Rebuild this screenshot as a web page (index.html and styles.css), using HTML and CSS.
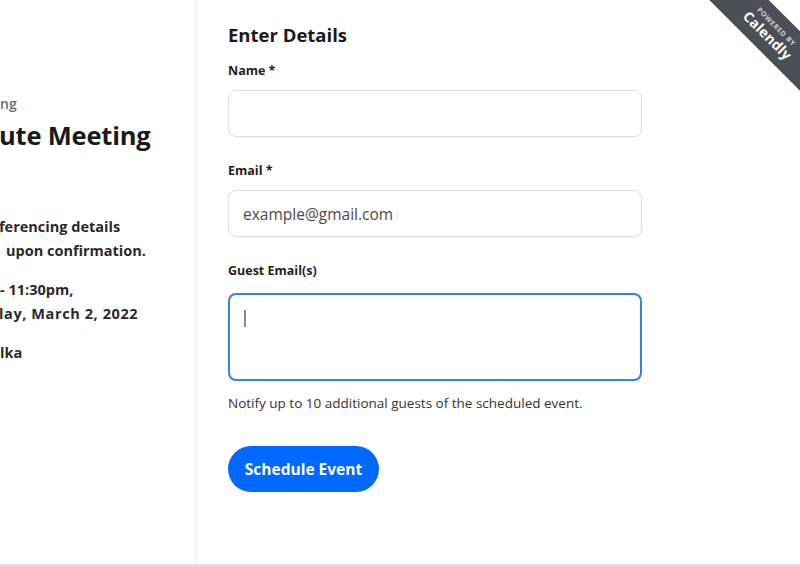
FILE: index.html
```html
<!DOCTYPE html>
<html lang="en">
<head>
<meta charset="utf-8">
<title>Enter Details</title>
<link rel="stylesheet" href="styles.css">
</head>
<body>
<div class="page">
  <aside class="info">
    <div class="owner">ng</div>
    <h1 class="event-name">ute Meeting</h1>
    <div class="detail first">
      <div class="line l-cut">ferencing details</div>
      <div class="line l-indent">upon confirmation.</div>
    </div>
    <div class="detail">
      <div class="line">- 11:30pm,</div>
      <div class="line l-cut l-date">lay, March 2, 2022</div>
    </div>
    <div class="detail">
      <div class="line">lka</div>
    </div>
  </aside>
  <main class="form">
    <h2 class="title">Enter Details</h2>
    <label class="label">Name *</label>
    <div class="field"></div>
    <label class="label gap">Email *</label>
    <div class="field"><span class="value">example@gmail.com</span></div>
    <label class="label gap">Guest Email(s)</label>
    <div class="field area"><span class="caret"></span></div>
    <p class="hint">Notify up to 10 additional guests of the scheduled event.</p>
    <button class="submit">Schedule Event</button>
  </main>
  <div class="badge">
    <span class="badge-small">POWERED BY</span>
    <span class="badge-big">Calendly</span>
  </div>
</div>
<div class="bottom"></div>
</body>
</html>
```
FILE: styles.css
```css
html, body {
  margin: 0;
  padding: 0;
  overflow: hidden;
  background: #ffffff;
  font-family: "Open Sans", "Liberation Sans", sans-serif;
  color: #1a1a1a;
}
.page {
  position: relative;
  display: flex;
  height: 564px;
  overflow: hidden;
}
.info {
  width: 196px;
  flex: 0 0 196px;
  border-right: 1px solid #ebebeb;
  overflow: hidden;
  white-space: nowrap;
}
.owner {
  margin-top: 94px;
  font-size: 14px;
  line-height: 20px;
  color: #6b6b6b;
  font-weight: 600;
}
.event-name {
  margin: 5px 0 0 -1px;
  font-size: 25.5px;
  line-height: 32px;
  font-weight: 700;
  color: #1a1a1a;
  letter-spacing: -0.2px;
}
.detail {
  margin-top: 15px;
  font-size: 14.5px;
  line-height: 24px;
  font-weight: 700;
  color: #2a2a2a;
}
.detail.first { margin-top: 64px; }
.line.l-cut { margin-left: -1px; }
.line.l-indent { margin-left: 6px; }
.line.l-date { letter-spacing: 0.6px; }

.form {
  flex: 1;
  padding: 23px 0 0 31px;
  display: flex;
  flex-direction: column;
  align-items: flex-start;
}
.title {
  margin: 0;
  font-size: 18.5px;
  line-height: 24px;
  font-weight: 700;
  color: #1a1a1a;
}
.label {
  margin-top: 16px;
  font-size: 12.5px;
  line-height: 16px;
  font-weight: 700;
  color: #1f1f1f;
}
.label.gap { margin-top: 26px; }
.field {
  box-sizing: border-box;
  margin-top: 11px;
  width: 414px;
  height: 47px;
  border: 1px solid #e0e0e0;
  border-radius: 8px;
  box-shadow: 0 1px 2px rgba(0,0,0,0.04);
  display: flex;
  align-items: center;
  padding-left: 14px;
}
.value {
  font-size: 15.5px;
  color: #4a4a4a;
}
.field.area {
  margin-top: 14px;
  height: 88px;
  border: 2px solid #3b7fe4;
  align-items: flex-start;
  padding: 15px 0 0 14px;
}
.caret {
  display: block;
  width: 2px;
  height: 17px;
  background: #8a8a8a;
}
.hint {
  margin: 13px 0 0 0;
  font-size: 13.5px;
  line-height: 18px;
  color: #333333;
}
.submit {
  margin-top: 34px;
  width: 151px;
  height: 46px;
  border: none;
  border-radius: 23px;
  background: #0069ff;
  color: #ffffff;
  font-family: "Open Sans", "Liberation Sans", sans-serif;
  font-size: 15.5px;
  font-weight: 700;
  padding: 0;
}
.badge {
  position: absolute;
  left: 686px;
  top: 11px;
  width: 170px;
  height: 42px;
  background: #4b4f56;
  transform: rotate(45deg);
  display: flex;
  flex-direction: column;
  align-items: center;
  justify-content: center;
  color: #ffffff;
  line-height: 1;
}
.badge-small {
  font-size: 7px;
  font-weight: 700;
  letter-spacing: 0.6px;
  color: #d0d2d5;
  margin-bottom: 2px;
}
.badge-big {
  font-size: 14px;
  font-weight: 700;
  letter-spacing: 0.2px;
}
.bottom {
  height: 3px;
  background: #dedede;
}
```
